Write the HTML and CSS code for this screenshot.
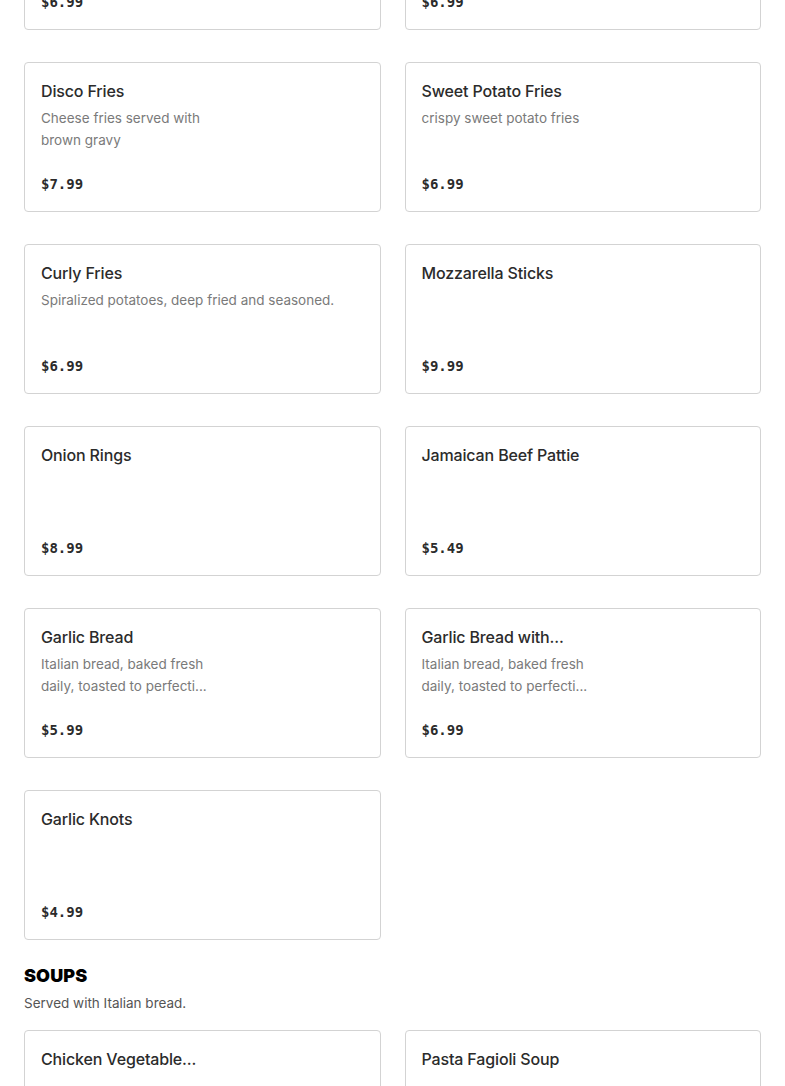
FILE: index.html
```html
<!DOCTYPE html>
<html lang="en">
<head>
<meta charset="utf-8">
<title>Menu</title>
<link rel="stylesheet" href="styles.css">
</head>
<body>
<main class="menu">
  <section class="section section-first">
    <div class="grid">
      <div class="card">
        <div class="card-title">&nbsp;</div>
        <div class="card-desc"></div>
        <div class="card-price">$6.99</div>
      </div>
      <div class="card">
        <div class="card-title">&nbsp;</div>
        <div class="card-desc"></div>
        <div class="card-price">$6.99</div>
      </div>
      <div class="card">
        <div class="card-title">Disco Fries</div>
        <div class="card-desc">Cheese fries served with<br>brown gravy</div>
        <div class="card-price">$7.99</div>
      </div>
      <div class="card">
        <div class="card-title">Sweet Potato Fries</div>
        <div class="card-desc">crispy sweet potato fries</div>
        <div class="card-price">$6.99</div>
      </div>
      <div class="card">
        <div class="card-title">Curly Fries</div>
        <div class="card-desc">Spiralized potatoes, deep fried and seasoned.</div>
        <div class="card-price">$6.99</div>
      </div>
      <div class="card">
        <div class="card-title">Mozzarella Sticks</div>
        <div class="card-desc"></div>
        <div class="card-price">$9.99</div>
      </div>
      <div class="card">
        <div class="card-title">Onion Rings</div>
        <div class="card-desc"></div>
        <div class="card-price">$8.99</div>
      </div>
      <div class="card">
        <div class="card-title">Jamaican Beef Pattie</div>
        <div class="card-desc"></div>
        <div class="card-price">$5.49</div>
      </div>
      <div class="card">
        <div class="card-title">Garlic Bread</div>
        <div class="card-desc">Italian bread, baked fresh<br>daily, toasted to perfecti...</div>
        <div class="card-price">$5.99</div>
      </div>
      <div class="card">
        <div class="card-title">Garlic Bread with...</div>
        <div class="card-desc">Italian bread, baked fresh<br>daily, toasted to perfecti...</div>
        <div class="card-price">$6.99</div>
      </div>
      <div class="card">
        <div class="card-title">Garlic Knots</div>
        <div class="card-desc"></div>
        <div class="card-price">$4.99</div>
      </div>
    </div>
  </section>
  <section class="section">
    <h2 class="section-title">SOUPS</h2>
    <p class="section-sub">Served with Italian bread.</p>
    <div class="grid">
      <div class="card">
        <div class="card-title">Chicken Vegetable...</div>
        <div class="card-desc"></div>
        <div class="card-price">$5.99</div>
      </div>
      <div class="card">
        <div class="card-title">Pasta Fagioli Soup</div>
        <div class="card-desc"></div>
        <div class="card-price">$5.99</div>
      </div>
    </div>
  </section>
</main>
</body>
</html>
```
FILE: styles.css
```css
* { box-sizing: border-box; }
html, body { margin: 0; padding: 0; background: #fff; }
body {
  font-family: Inter, "Noto Sans", "Liberation Sans", sans-serif;
  color: #2b2b2b;
  overflow: hidden;
}
.menu { padding: 0 24px; }
.section-first { margin-top: -120px; }
.grid {
  display: grid;
  grid-template-columns: 1fr 1fr;
  column-gap: 24px;
  row-gap: 32px;
}
.card {
  height: 150px;
  border: 1px solid #d3d3d3;
  border-radius: 4px;
  padding: 16px 16px 15px;
  display: flex;
  flex-direction: column;
  background: #fff;
}
.card-title {
  font-size: 16px;
  line-height: 24px;
  font-weight: 500;
  color: #2b2b2b;
  letter-spacing: -0.15px;
}
.card-desc {
  margin-top: 4px;
  font-size: 13.5px;
  line-height: 22px;
  color: #7a7a7a;
  letter-spacing: 0;
}
.card-price {
  margin-top: auto;
  font-family: "DejaVu Sans Mono", "Liberation Mono", monospace;
  font-weight: 700;
  font-size: 14px;
  line-height: 24px;
  color: #2b2b2b;
}
.section-title {
  margin: 24px 0 0;
  font-size: 18px;
  line-height: 24px;
  font-weight: 900;
  color: #000;
  letter-spacing: 0.1px;
}
.section-sub {
  margin: 4px 0 16px;
  font-size: 13.5px;
  line-height: 22px;
  color: #555;
}
```
